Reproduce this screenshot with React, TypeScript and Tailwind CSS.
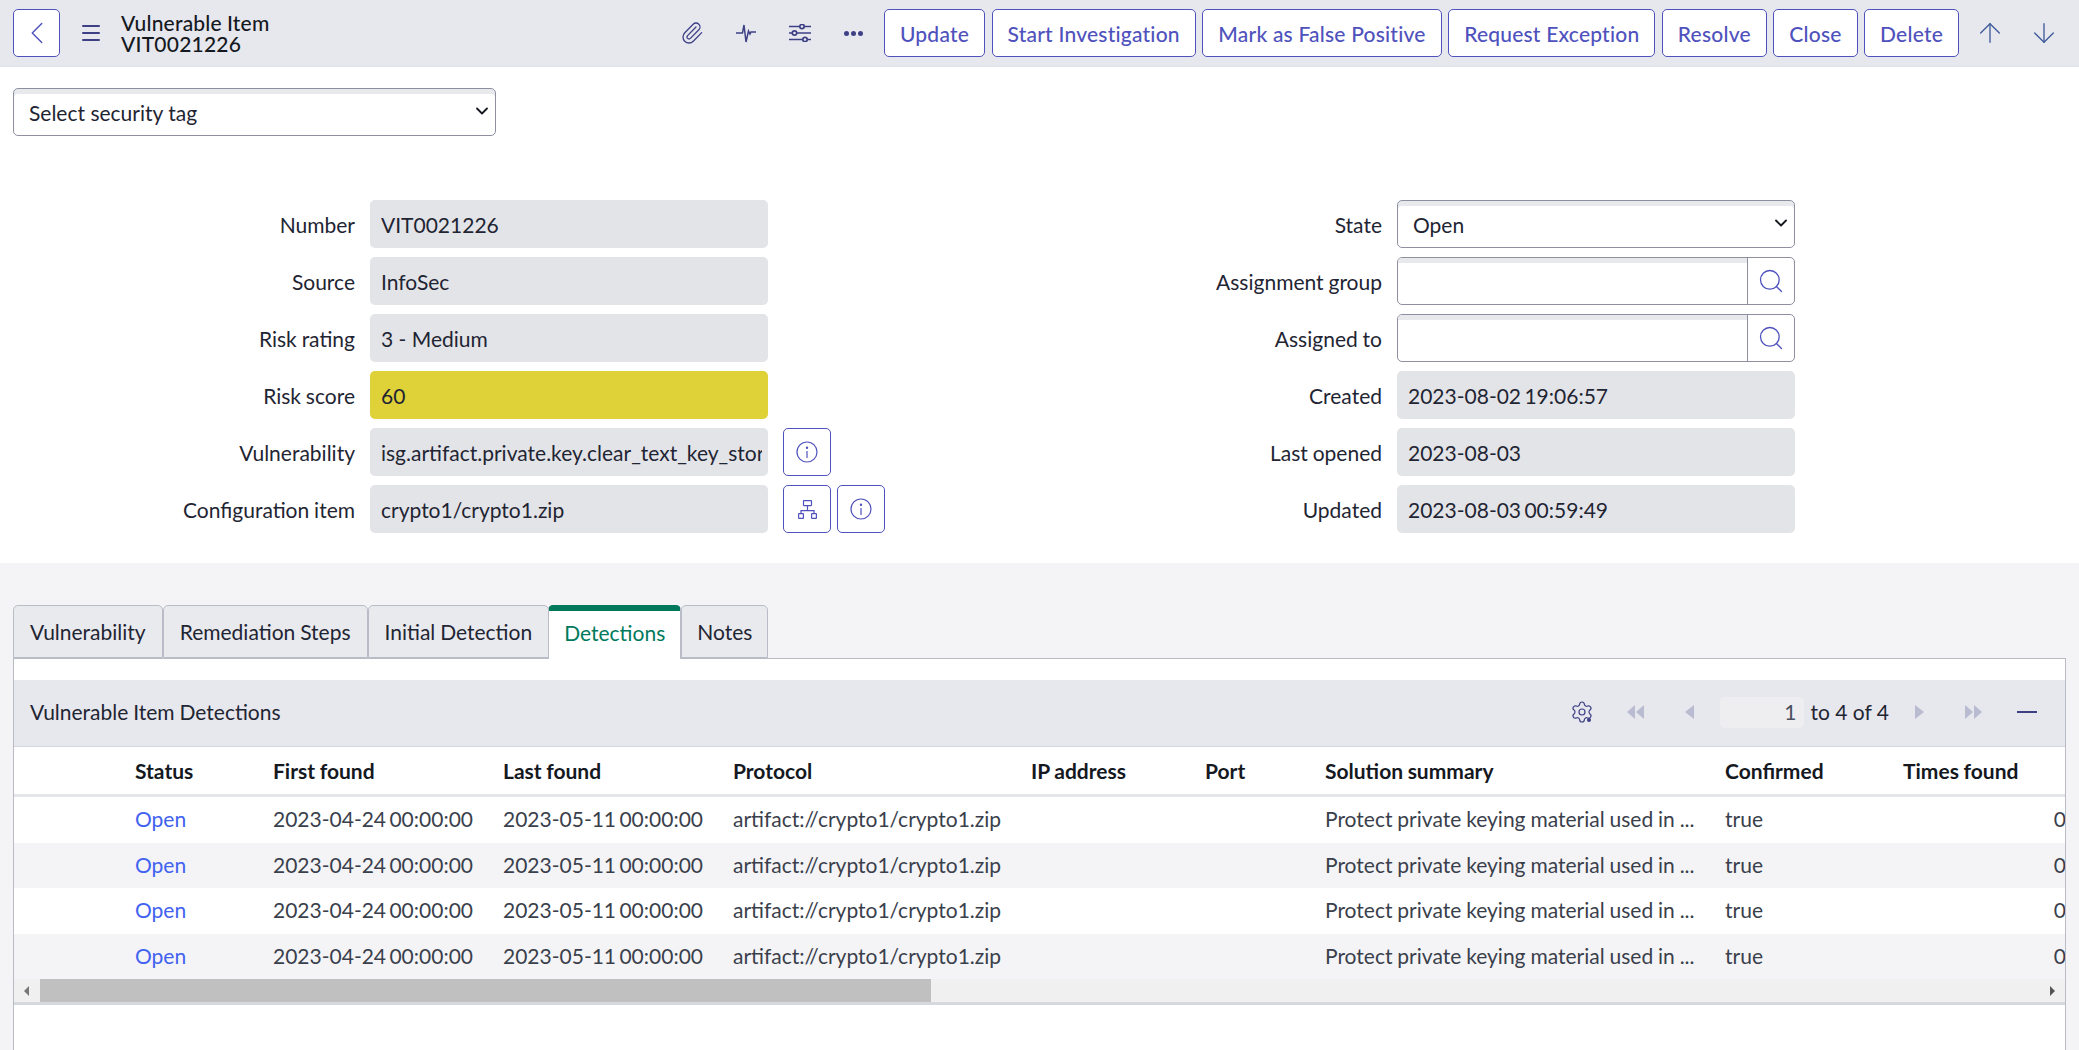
import React from 'react';
import { ArrowDown, ArrowUp, ChevronDown, ChevronLeft, Menu, Paperclip, Search, Settings } from 'lucide-react';

const actions = ['Update', 'Start Investigation', 'Mark as False Positive', 'Request Exception', 'Resolve', 'Close', 'Delete'];
const tabs = ['Vulnerability', 'Remediation Steps', 'Initial Detection', 'Detections', 'Notes'];
const columns = ['', 'Status', 'First found', 'Last found', 'Protocol', 'IP address', 'Port', 'Solution summary', 'Confirmed', 'Times found'];
const gridCols = 'grid grid-cols-[121px_138px_230px_230px_298px_174px_120px_400px_178px_163px]';

const IconButton = ({ children }: { children: React.ReactNode }) => (
  <button type="button" className="flex h-12 w-12 items-center justify-center rounded-[5px] border border-[#4f52bd] bg-white text-[#4f52bd]">
    {children}
  </button>
);

const InfoIcon = () => (
  <svg viewBox="0 0 22 22" className="h-[22px] w-[22px]" fill="none" stroke="currentColor" strokeWidth="1.2">
    <circle cx="11" cy="11" r="10" />
    <path d="M11 10v7" />
    <circle cx="11" cy="6.7" r="0.6" fill="currentColor" />
  </svg>
);

const TreeIcon = () => (
  <svg viewBox="0 0 19 19" className="h-[19px] w-[19px]" fill="none" stroke="currentColor" strokeWidth="1.2">
    <rect x="5.5" y="0.6" width="8" height="5" rx="0.5" />
    <path d="M9.5 5.6v5M3 13.6v-3h13v3" />
    <rect x="0.6" y="13.6" width="4.8" height="4.8" rx="0.5" />
    <rect x="13.6" y="13.6" width="4.8" height="4.8" rx="0.5" />
  </svg>
);

const ReadOnlyField = ({ value, className = 'bg-[#e3e4e8]' }: { value: string; className?: string }) => (
  <input
    readOnly
    value={value}
    className={`h-12 w-[398px] rounded-[5px] pl-[11px] pr-[6px] text-[#1f2533] outline-none ${className}`}
  />
);

const Row = ({ label, left, children }: { label: string; left?: boolean; children: React.ReactNode }) => (
  <div className="flex h-12 items-center">
    <label className={`pr-[15px] pt-[1px] text-right text-[#1f2533] ${left ? 'w-[370px]' : 'w-[357px]'}`}>{label}</label>
    {children}
  </div>
);

const Lookup = () => (
  <div className="flex h-12 w-[398px] overflow-hidden rounded-[5px] border border-[#8e90a0]">
    <input className="min-w-0 flex-1 border-r border-[#8e90a0] shadow-[inset_0_5px_0_#e8e9ed] outline-none" />
    <button type="button" className="flex w-[46px] items-center justify-center text-[#4f52bd]">
      <Search size={28} strokeWidth={1.1} />
    </button>
  </div>
);

const SelectBox = ({ value, className }: { value: string; className: string }) => (
  <div className={`relative h-12 ${className}`}>
    <select className="h-12 w-full appearance-none rounded-[5px] border border-[#8e90a0] bg-white pl-[15px] pt-[2px] text-[#1f2533] shadow-[inset_0_5px_0_#e8e9ed] outline-none">
      <option>{value}</option>
    </select>
    <ChevronDown size={20} strokeWidth={2.2} className="pointer-events-none absolute right-[4px] top-[13px] text-[#15191f]" />
  </div>
);

const Triangles = ({ dir, count, className }: { dir: 'left' | 'right'; count: 1 | 2; className: string }) => {
  const d =
    count === 2
      ? dir === 'left'
        ? 'M0 7l8-7v14zM9 7l8-7v14z'
        : 'M8 7L0 0v14zM17 7L9 0v14z'
      : dir === 'left'
        ? 'M0 7l9-7v14z'
        : 'M9 7L0 0v14z';
  return (
    <svg viewBox={count === 2 ? '0 0 17 14' : '0 0 9 14'} className={`h-[14px] text-[#b9bbd0] ${count === 2 ? 'w-[17px]' : 'w-[9px]'} ${className}`} fill="currentColor">
      <path d={d} />
    </svg>
  );
};

export default function App() {
  return (
    <div className="min-h-[1050px] overflow-hidden bg-[#f4f4f6] font-['Lato','Liberation_Sans',sans-serif] text-[21px] leading-[28px] text-[#1f2533] [word-spacing:-0.5px]">
      {/* header */}
      <header className="flex h-[67px] items-center border-b border-[#e0e1e6] bg-[#e7e8ed] pl-[13px] pr-[8px]">
        <button type="button" className="flex h-12 w-[47px] items-center justify-center rounded-[5px] border border-[#4f52bd] bg-white text-[#4f52bd]">
          <ChevronLeft size={38} strokeWidth={0.9} />
        </button>
        <Menu size={24} strokeWidth={2} className="ml-[19px] text-[#3e4086]" />
        <div className="ml-[18px] font-medium leading-[21px] tracking-[0.01em] text-[#15191f]">
          <div>Vulnerable Item</div>
          <div>VIT0021226</div>
        </div>
        <div className="ml-auto flex items-center text-[#3e4086]">
          <div className="flex w-[54px] justify-center"><Paperclip size={24} strokeWidth={1.3} /></div>
          <div className="flex w-[54px] justify-center">
            <svg viewBox="0 0 20 20" className="h-5 w-5" fill="none" stroke="currentColor" strokeWidth="1.5">
              <path d="M0 10h6.5L8 2l2 17 2.5-11L14 11l1-2h5" />
            </svg>
          </div>
          <div className="flex w-[54px] justify-center">
            <svg viewBox="0 0 22 18" className="h-[18px] w-[22px]" fill="none" stroke="currentColor" strokeWidth="1.7">
              <path d="M0 2.5h22M0 9h22M0 15.5h22" />
              <circle cx="13" cy="2.5" r="2.2" fill="#e7e8ed" />
              <circle cx="5.5" cy="9" r="2.2" fill="#e7e8ed" />
              <circle cx="16" cy="15.5" r="2.2" fill="#e7e8ed" />
            </svg>
          </div>
          <div className="flex w-[54px] justify-center">
            <div className="flex gap-[2px]">
              <span className="h-[5px] w-[5px] rounded-full bg-[#3e4086]" />
              <span className="h-[5px] w-[5px] rounded-full bg-[#3e4086]" />
              <span className="h-[5px] w-[5px] rounded-full bg-[#3e4086]" />
            </div>
          </div>
        </div>
        <div className="ml-[3px] flex items-center gap-[6.5px]">
          {actions.map((a) => (
            <button key={a} type="button" className="h-12 rounded-[5px] border border-[#4f52bd] bg-white px-[15px] pt-[1px] font-medium tracking-[0.01em] whitespace-nowrap text-[#4f52bd]">
              {a}
            </button>
          ))}
        </div>
        <div className="ml-[4px] flex items-center text-[#3e5a9a]">
          <div className="flex w-[54px] justify-center"><ArrowUp size={32} strokeWidth={1} /></div>
          <div className="flex w-[54px] justify-center"><ArrowDown size={32} strokeWidth={1} /></div>
        </div>
      </header>

      {/* form */}
      <section className="bg-white pb-[30px]">
        <div className="pl-[13px] pt-[21px]">
          <SelectBox value="Select security tag" className="w-[483px]" />
        </div>
        <div className="mt-16 flex">
          <div className="flex w-[1040px] flex-col gap-[9px]">
            <Row label="Number" left><ReadOnlyField value="VIT0021226" /></Row>
            <Row label="Source" left><ReadOnlyField value="InfoSec" /></Row>
            <Row label="Risk rating" left><ReadOnlyField value="3 - Medium" /></Row>
            <Row label="Risk score" left><ReadOnlyField value="60" className="bg-[#dfd138]" /></Row>
            <Row label="Vulnerability" left>
              <ReadOnlyField value="isg.artifact.private.key.clear_text_key_storage" />
              <div className="ml-[15px]"><IconButton><InfoIcon /></IconButton></div>
            </Row>
            <Row label="Configuration item" left>
              <ReadOnlyField value="crypto1/crypto1.zip" />
              <div className="ml-[15px] flex gap-[6px]">
                <IconButton><TreeIcon /></IconButton>
                <IconButton><InfoIcon /></IconButton>
              </div>
            </Row>
          </div>
          <div className="flex flex-col gap-[9px]">
            <Row label="State"><SelectBox value="Open" className="w-[398px]" /></Row>
            <Row label="Assignment group"><Lookup /></Row>
            <Row label="Assigned to"><Lookup /></Row>
            <Row label="Created"><ReadOnlyField value="2023-08-02 19:06:57" className="bg-[#e3e4e8] [word-spacing:-2px]" /></Row>
            <Row label="Last opened"><ReadOnlyField value="2023-08-03" /></Row>
            <Row label="Updated"><ReadOnlyField value="2023-08-03 00:59:49" className="bg-[#e3e4e8] [word-spacing:-2px]" /></Row>
          </div>
        </div>
      </section>

      {/* tabs */}
      <div className="mt-[42px] flex h-[53px] pl-[13px]">
        {tabs.map((t) =>
          t === 'Detections' ? (
            <div key={t} className="z-10 -mb-px -ml-px flex items-center rounded-t-[5px] border-x border-[#b9bcc6] border-t-[6px] border-t-[#00795c] bg-white px-[15px] pb-[5px] text-[#00795c]">
              {t}
            </div>
          ) : (
            <div key={t} className={`flex items-center rounded-t-[5px] border border-[#b9bcc6] bg-[#e9eaee] ${t === 'Notes' ? 'px-[15px]' : 'px-4'}`}>
              {t}
            </div>
          ),
        )}
      </div>

      {/* detections panel */}
      <div className="mx-[13px] h-[392px] overflow-hidden border border-b-0 border-[#b9bcc6] bg-white">
        <div className="mt-[21px] flex h-[67px] items-center border-b border-[#d5d7dd] bg-[#e7e8ed] pb-[2px] pl-4">
          <span>Vulnerable Item Detections</span>
          <div className="ml-auto flex items-center pr-[28px]">
            <div className="relative h-6 w-6 text-[#3e4086]">
              <Settings size={24} strokeWidth={1.2} />
              <span className="absolute bottom-[2px] right-[3px] h-[4px] w-[4px] rounded-full bg-[#3e4086]" />
            </div>
            <Triangles dir="left" count={2} className="ml-[33px]" />
            <Triangles dir="left" count={1} className="ml-[41px]" />
            <div className="ml-[26px] flex h-[31px] w-[84px] items-center justify-end rounded-[5px] bg-[#eeeef1] pr-[8px] text-[#4a5060]">1</div>
            <span className="ml-[6px] [word-spacing:0]">to 4 of 4</span>
            <Triangles dir="right" count={1} className="ml-[26px]" />
            <Triangles dir="right" count={2} className="ml-[41px]" />
            <div className="ml-[35px] h-[2px] w-5 bg-[#3e4086]" />
          </div>
        </div>

        <div className={`${gridCols} h-[50px] items-center border-b-[3px] border-[#e3e5e9] font-bold text-[#15191f]`}>
          {columns.map((c) => (
            <div key={c || 'select'} className="whitespace-nowrap">{c}</div>
          ))}
        </div>

        {[0, 1, 2, 3].map((i) => (
          <div key={i} className={`${gridCols} h-[45.5px] items-center pb-[1px] text-[#3a3f4c] ${i % 2 === 1 ? 'bg-[#f4f4f6]' : 'bg-white'}`}>
            <div />
            <div className="text-[#4262f0]">Open</div>
            <div className="whitespace-nowrap [word-spacing:-2px]">2023-04-24 00:00:00</div>
            <div className="whitespace-nowrap [word-spacing:-2px]">2023-05-11 00:00:00</div>
            <div className="whitespace-nowrap">artifact://crypto1/crypto1.zip</div>
            <div />
            <div />
            <div className="whitespace-nowrap">Protect private keying material used in ...</div>
            <div>true</div>
            <div className="text-right">0</div>
          </div>
        ))}

        {/* scrollbar */}
        <div className="flex h-[26px] items-start border-b-[3px] border-[#d5d8dc] bg-[#f0f0f0]">
          <div className="flex h-[23px] w-[26px] items-center justify-center">
            <svg viewBox="0 0 8 10" className="h-[10px] w-2" fill="#777"><path d="M6 0v10L1 5z" /></svg>
          </div>
          <div className="h-[23px] w-[891px] bg-[#c0c0c0]" />
          <div className="ml-auto flex h-[23px] w-[26px] items-center justify-center">
            <svg viewBox="0 0 8 10" className="h-[10px] w-2" fill="#555"><path d="M2 0v10l5-5z" /></svg>
          </div>
        </div>
      </div>
    </div>
  );
}
